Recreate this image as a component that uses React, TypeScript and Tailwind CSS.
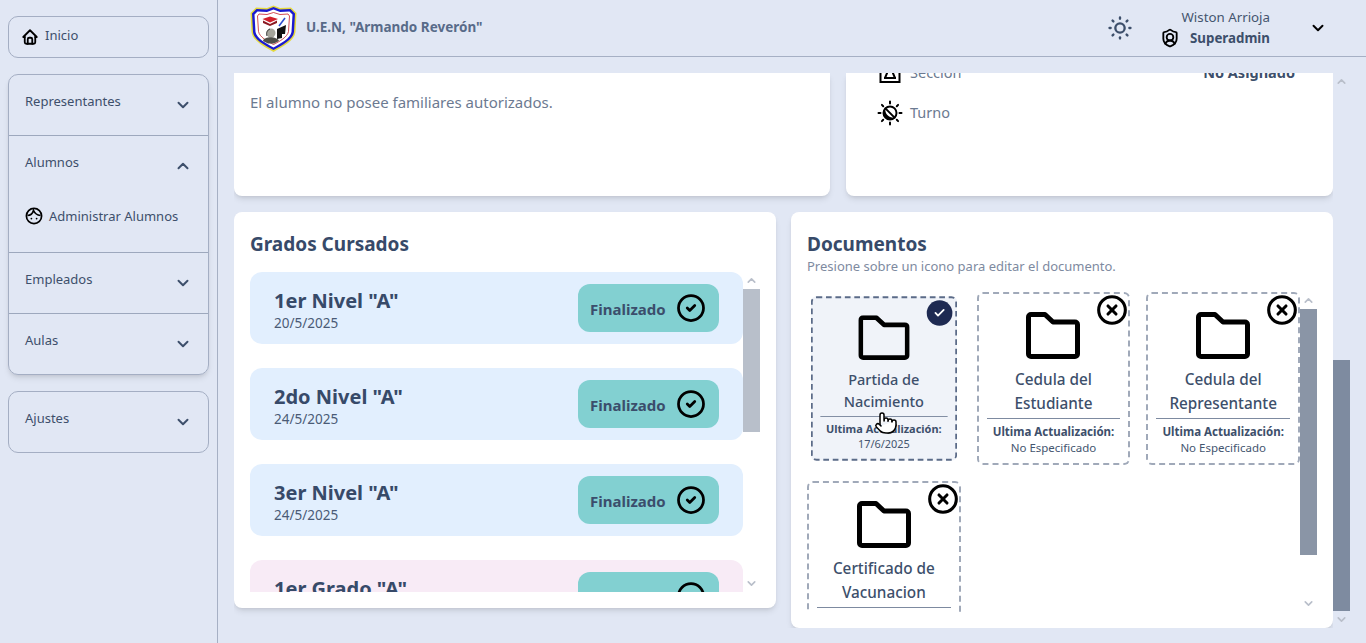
import { ChevronDown, ChevronUp, Check, CircleCheck, CircleX, Pointer, ShieldUser, SunMedium } from 'lucide-react'
import { TbHome } from 'react-icons/tb'

const font = { fontFamily: '"Noto Sans", sans-serif' }

function Logo() {
  return (
    <svg width="47" height="47" viewBox="0 0 47 47" aria-hidden="true">
      <path d="M23.5 0.5 L30 3 L41 2.5 L46.5 8 L45.5 27 C44.5 36 32 42 23.5 47 C15 42 2.5 36 1.5 27 L0.5 8 L6 2.5 L17 3 Z" fill="#e4d93c" />
      <path d="M23.5 2 L30 4.5 L40.5 4 L45 8.5 L44 27 C43 35 31.5 40.5 23.5 45 C15.5 40.5 4 35 3 27 L2 8.5 L6.5 4 L17 4.5 Z" fill="#1a1ad0" />
      <path d="M23.5 4.5 L30 7 L39.5 6.5 L42.5 9.5 L41.5 27 C40.5 33.5 30.5 38.5 23.5 42.5 C16.5 38.5 6.5 33.5 5.5 27 L4.5 9.5 L7.5 6.5 L17 7 Z" fill="#fff" />
      <path d="M23.5 7.5 L30 9.5 L38 9 L39.5 11 L38.5 26.5 C37.5 32 29.5 36.5 23.5 39.5 C17.5 36.5 9.5 32 8.5 26.5 L7.5 11 L9 9 L17 9.5 Z" fill="none" stroke="#c8202a" strokeWidth="0.8" />
      <path d="M12.5 14 L20 11.5 L28 14 L20 17.5 Z" fill="#d11f2a" />
      <path d="M13 15.5 L20 19 L27 15.5 L27 18 L20 21 L13 18 Z" fill="#8c1a22" />
      <path d="M27 24 L36 20 L35 29 L32 29 L32 33 L27 34 Z" fill="#111" />
      <path d="M35 13 L29 21" stroke="#2a4bd0" strokeWidth="1.6" />
      <circle cx="21" cy="28" r="4.5" fill="#a5a59c" />
      <path d="M20 24 C17 25 16 28 17 31" fill="none" stroke="#333" strokeWidth="1" />
      <path d="M13 36 C14 31 27 31 29 36 L24 38.5 L18 38.5 Z" fill="#4f4f49" />
    </svg>
  )
}

function FaceIcon() {
  return (
    <svg width="18" height="18" viewBox="0 0 18 18" fill="none" stroke="#000" strokeWidth="1.7" aria-hidden="true">
      <circle cx="9" cy="9" r="7.6" />
      <path d="M2.5 8.5 Q7 8.5 8.5 3.5 Q10.5 8 15.5 8.5" />
      <circle cx="6.4" cy="11.6" r="0.9" fill="#000" stroke="none" />
      <circle cx="11.6" cy="11.6" r="0.9" fill="#000" stroke="none" />
    </svg>
  )
}

function SectionIcon() {
  return (
    <svg width="24" height="24" viewBox="0 0 24 24" fill="none" stroke="#000" strokeWidth="2" aria-hidden="true">
      <rect x="2.5" y="3" width="19" height="18" />
      <path d="M7 17 L9.5 11 L14.5 11 L17 17 M6 17 L18 17" />
      <circle cx="12" cy="8" r="2" />
    </svg>
  )
}

function ShiftIcon() {
  return (
    <svg width="26" height="26" viewBox="0 0 26 26" fill="none" stroke="#000" strokeWidth="2" strokeLinecap="round" aria-hidden="true">
      <circle cx="13" cy="13" r="6.5" />
      <path d="M8.4 8.4 L17.6 17.6" />
      <path d="M8.4 8.4 A6.5 6.5 0 0 0 17.6 17.6 A8 8 0 0 1 8.4 8.4 Z" fill="#000" stroke="none" />
      <path d="M13 1.5 V3.5 M13 22.5 V24.5 M1.5 13 H3.5 M22.5 13 H24.5 M4.9 4.9 L6.2 6.2 M19.8 19.8 L21.1 21.1 M4.9 21.1 L6.2 19.8 M19.8 6.2 L21.1 4.9" />
    </svg>
  )
}

function FolderIcon() {
  return (
    <svg width="54" height="47" viewBox="0 0 54 47" fill="none" stroke="#000" strokeWidth="5" strokeLinejoin="round" className="mt-[18px] shrink-0" aria-hidden="true">
      <path d="M5 2.5 H19 L27 10 H49 A2.5 2.5 0 0 1 51.5 12.5 V42 A2.5 2.5 0 0 1 49 44.5 H5 A2.5 2.5 0 0 1 2.5 42 V5 A2.5 2.5 0 0 1 5 2.5 Z" />
    </svg>
  )
}

function MenuRow({ label, last }: { label: string; last?: boolean }) {
  return (
    <div className={`flex items-start justify-between pl-4 pr-4 ${last ? 'h-[60px]' : 'h-[61px] border-b border-[#9da8bd]'}`}>
      <span className="mt-[16px] text-[13px] leading-[20px] text-[#3d4f6b]">{label}</span>
      <ChevronDown size={18} strokeWidth={2.6} className="mt-[21px] text-[#3d4f6b]" />
    </div>
  )
}

function Sidebar() {
  return (
    <aside className="flex h-full w-[218px] shrink-0 flex-col border-r border-[#a6b0c4] pl-2 pr-2 pt-4">
      <div className="flex h-[42px] w-[201px] items-start rounded-[10px] border border-[#a4aec3] pl-3">
        <TbHome size={18} strokeWidth={2.4} className="mt-[11px] text-black" />
        <span className="ml-[6px] mt-[8px] text-[13px] leading-[20px] text-[#3d4f6b]">Inicio</span>
      </div>
      <div className="mt-4 w-[201px] rounded-[10px] border border-[#a4aec3] shadow-md">
        <MenuRow label="Representantes" />
        <div className="h-[117px] border-b border-[#9da8bd]">
          <div className="flex items-start justify-between pl-4 pr-4">
            <span className="mt-[16px] text-[13px] leading-[20px] text-[#3d4f6b]">Alumnos</span>
            <ChevronUp size={18} strokeWidth={2.6} className="mt-[21px] text-[#3d4f6b]" />
          </div>
          <div className="ml-4 mt-[31px] flex items-center gap-[6px]">
            <FaceIcon />
            <span className="text-[13px] leading-[20px] text-[#3d4f6b]">Administrar Alumnos</span>
          </div>
        </div>
        <MenuRow label="Empleados" />
        <MenuRow label="Aulas" last />
      </div>
      <div className="mt-4 w-[201px] rounded-[10px] border border-[#a4aec3]">
        <MenuRow label="Ajustes" last />
      </div>
    </aside>
  )
}

function Header() {
  return (
    <header className="flex h-[57px] shrink-0 items-center border-b border-[#a6b0c4] pl-[32px] pr-[39px]">
      <Logo />
      <span className="ml-[9px] mb-[1px] text-[13.5px] font-bold text-[#586b89]">U.E.N, "Armando Reverón"</span>
      <div className="ml-auto flex items-center">
        <SunMedium size={28} strokeWidth={2} className="text-[#3d4f6b]" />
        <div className="ml-[26px] flex flex-col items-end">
          <span className="-mt-[1px] text-[13.3px] leading-[20px] text-[#44556f]">Wiston Arrioja</span>
          <div className="mt-[1px] flex items-center gap-[10px]">
            <ShieldUser size={20} strokeWidth={2.2} className="text-black" />
            <span className="text-[13.3px] font-bold leading-[20px] text-[#3d4f6b]">Superadmin</span>
          </div>
        </div>
        <ChevronDown size={18} strokeWidth={2.6} className="ml-[39px] text-black" />
      </div>
    </header>
  )
}

function GradeRow({ title, date, pink }: { title: string; date: string; pink?: boolean }) {
  return (
    <div className={`flex h-[72px] shrink-0 items-center justify-between rounded-xl pl-6 pr-6 ${pink ? 'bg-[#f8ebf6]' : 'bg-[#e2effe]'}`}>
      <div className="pt-[3px]">
        <div className="text-[20px] font-bold leading-[26px] text-[#374a69]">{title}</div>
        <div className="text-[13.5px] leading-[18px] text-[#4a5b76]">{date}</div>
      </div>
      <div className="flex h-[48px] w-[141px] items-center justify-between rounded-xl bg-[#82d0d1] pl-3 pr-[13px]">
        <span className="pt-[2px] text-[15px] font-bold text-[#3b4e6c]">Finalizado</span>
        <CircleCheck size={30} strokeWidth={2.2} className="text-black" />
      </div>
    </div>
  )
}

function ScrollColumn({ top, height, thumb }: { top: string; height: string; thumb: string }) {
  return (
    <div className="relative flex h-full w-[17px] shrink-0 flex-col items-center justify-between py-[2px]">
      <ChevronUp size={13} strokeWidth={3} className="text-[#b9bfca]" />
      <div className={`absolute left-0 w-full ${top} ${height} ${thumb}`} />
      <ChevronDown size={13} strokeWidth={3} className="text-[#b9bfca]" />
    </div>
  )
}

function DocCard({ title, when, done }: { title: [string, string]; when: string; done?: boolean }) {
  return (
    <div className={`relative flex h-[173px] flex-col items-center rounded-md border-2 border-dashed px-[8px] ${done ? 'scale-95 border-[#5b6b88] bg-[#f0f3f9]' : 'border-[#a0a9b9]'}`}>
      {done ? (
        <div className="absolute right-[3px] top-[2px] flex h-[27px] w-[27px] items-center justify-center rounded-full bg-[#1e2a52]">
          <Check size={13} strokeWidth={3.5} className="text-white" />
        </div>
      ) : (
        <CircleX size={32} strokeWidth={2.3} className="absolute right-0 top-0 text-black" />
      )}
      <FolderIcon />
      <div className="mt-[8px] whitespace-nowrap text-center text-[15.3px] font-medium leading-[24px] text-[#3d4f6b]">
        {title[0]}
        <br />
        {title[1]}
      </div>
      <div className="mt-[3px] w-full border-t border-[#7d8aa0] text-center">
        <div className="mt-[4px] text-[11.5px] font-bold leading-[17px] text-[#3d4f6b]">Ultima Actualización:</div>
        <div className="text-[11.5px] leading-[16px] text-[#44556f]">{when}</div>
      </div>
    </div>
  )
}

export default function App() {
  return (
    <div style={font} className="relative flex h-[643px] w-[1366px] overflow-hidden bg-[#e1e7f4]">
      <Sidebar />
      <div className="flex min-w-0 flex-1 flex-col">
        <Header />
        <div className="flex h-[571px] shrink-0 pl-4 pt-4">
          <div className="h-[555px] w-[1099px] overflow-hidden">
            <div className="flex h-[123px] gap-4">
              <div className="h-full w-[596px] rounded-b-lg bg-white pl-4 pt-[18px] shadow-md">
                <p className="text-[15px] leading-[22px] text-[#6c7a91]">El alumno no posee familiares autorizados.</p>
              </div>
              <div className="relative h-full w-[487px] overflow-hidden rounded-b-lg bg-white shadow-md">
                <div className="-mt-[11px] pl-[32px] pr-[38px]">
                  <div className="flex h-[22px] items-center justify-between">
                    <div className="flex items-center gap-2">
                      <SectionIcon />
                      <span className="text-[14.5px] text-[#6c7a91]">Sección</span>
                    </div>
                    <span className="text-[14.5px] font-bold text-[#3d4f6b]">No Asignado</span>
                  </div>
                  <div className="-ml-[1px] mt-[16px] flex items-center gap-[7px]">
                    <ShiftIcon />
                    <span className="text-[14.5px] text-[#6c7a91]">Turno</span>
                  </div>
                </div>
              </div>
            </div>
            <div className="mt-4 flex items-start gap-[15px]">
              <section className="h-[396px] w-[542px] rounded-lg bg-white pl-4 pr-4 shadow-md">
                <h2 className="pt-[18px] text-[19px] font-bold leading-[28px] text-[#374a69]">Grados Cursados</h2>
                <div className="mt-[14px] flex h-[320px]">
                  <div className="flex w-[493px] flex-col gap-6 overflow-hidden">
                    <GradeRow title='1er Nivel "A"' date="20/5/2025" />
                    <GradeRow title='2do Nivel "A"' date="24/5/2025" />
                    <GradeRow title='3er Nivel "A"' date="24/5/2025" />
                    <GradeRow title='1er Grado "A"' date="24/5/2025" pink />
                  </div>
                  <ScrollColumn top="top-[17px]" height="h-[143px]" thumb="bg-[#b8bfca]" />
                </div>
              </section>
              <section className="h-[416px] w-[542px] rounded-lg bg-white pl-4 pr-4 shadow-md">
                <h2 className="pt-[18px] text-[19px] font-bold leading-[28px] text-[#374a69]">Documentos</h2>
                <p className="text-[13px] leading-[16px] text-[#7e8a9f]">Presione sobre un icono para editar el documento.</p>
                <div className="mt-[18px] flex h-[320px]">
                  <div className="w-[493px] overflow-hidden">
                    <div className="grid grid-cols-3 gap-4">
                      <DocCard title={['Partida de', 'Nacimiento']} when="17/6/2025" done />
                      <DocCard title={['Cedula del', 'Estudiante']} when="No Especificado" />
                      <DocCard title={['Cedula del', 'Representante']} when="No Especificado" />
                      <DocCard title={['Certificado de', 'Vacunacion']} when="No Especificado" />
                    </div>
                  </div>
                  <ScrollColumn top="top-[17px]" height="h-[246px]" thumb="bg-[#8a95a6]" />
                </div>
              </section>
            </div>
          </div>
          <ScrollColumn top="top-[287px]" height="h-[251px]" thumb="bg-[#7e8ba0]" />
        </div>
      </div>
      <Pointer size={24} strokeWidth={1.5} fill="#fff" className="absolute left-[874px] top-[411px] text-black" />
    </div>
  )
}
